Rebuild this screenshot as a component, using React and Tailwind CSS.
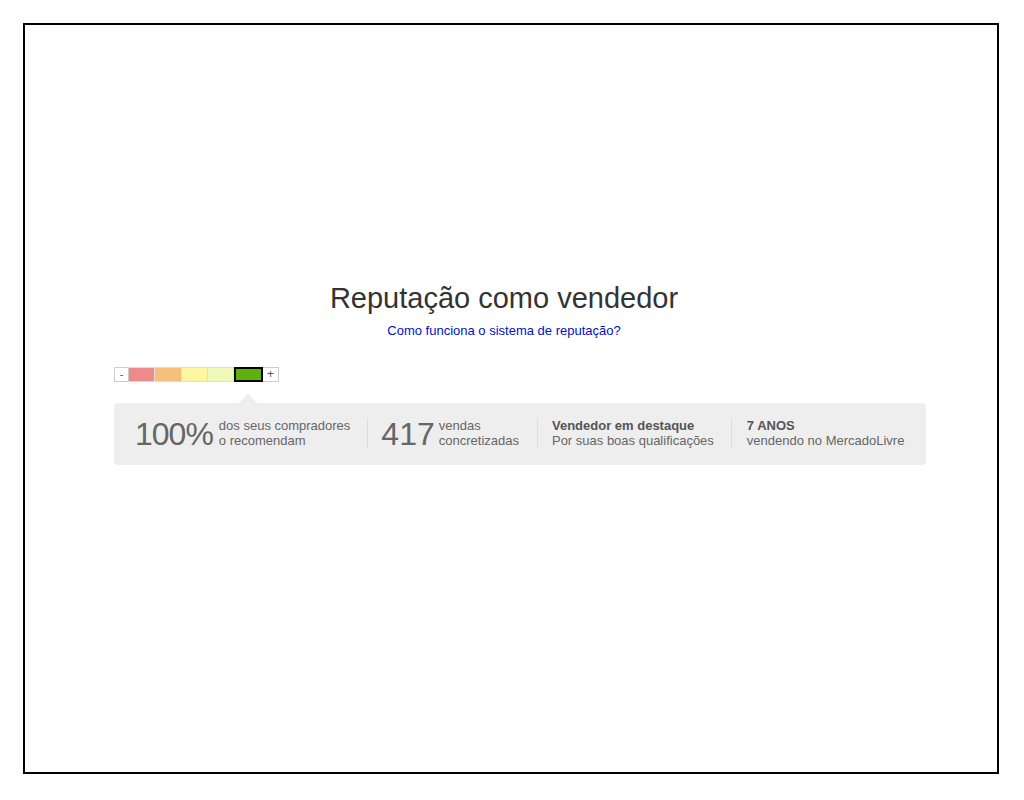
export default function App() {
  const segments = [
    { color: 'bg-[#ef8a8b]', w: 'w-[26px]' },
    { color: 'bg-[#f6c07a]', w: 'w-[27px]' },
    { color: 'bg-[#fff79f]', w: 'w-[26px]' },
    { color: 'bg-[#eef8b8]', w: 'w-[26px]' },
  ];

  return (
    <div className="w-full h-[800px] bg-white pt-[23px] pl-[23px] font-['Liberation_Sans',Arial,sans-serif]">
      <div className="w-[976px] h-[751px] border-2 border-black bg-white">
        <div className="ml-[89px] w-[812px] pt-[257px]">
          {/* header */}
          <div className="w-[780px] text-center">
            <h1 className="text-[29px] leading-[32px] text-[#333]">Reputação como vendedor</h1>
            <a href="#" className="block mt-[9px] text-[13px] leading-[16px] text-[#0010cc]">
              Como funciona o sistema de reputação?
            </a>
          </div>

          {/* thermometer */}
          <div className="mt-[28px] flex h-[15px]">
            <div className="w-[15px] border border-[#ccc] bg-white text-[11px] leading-[12px] text-[#555] text-center">-</div>
            {segments.map((s, i) => (
              <div key={i} className={`${s.w} ${s.color} border-y border-r border-[#ddd]`} />
            ))}
            <div className="w-[29px] border-2 border-black bg-[#5cb10a]" />
            <div className="w-[16px] border border-l-0 border-[#ccc] bg-white text-[12px] leading-[12px] text-[#555] text-center">+</div>
          </div>

          {/* summary panel */}
          <div className="relative mt-[21px] h-[62px] pb-[2px] rounded-[4px] bg-[#eeeeee] flex items-center text-[#666]">
            <div className="absolute -top-[9px] left-[125px] w-0 h-0 border-x-[9px] border-x-transparent border-b-[9px] border-b-[#eeeeee]" />

            <div className="flex items-end pl-[21px] pr-[17px]">
              <span className="text-[32px] leading-[28px] tracking-[-1px]">100%</span>
              <span className="ml-[6px] text-[13px] leading-[15px]">
                dos seus compradores
                <br />o recomendam
              </span>
            </div>

            <div className="flex items-end border-l border-[#dcdcdc] pl-[13px] pr-[18px] pb-[1px] h-[31px]">
              <span className="text-[32px] leading-[28px]">417</span>
              <span className="ml-[4px] text-[13px] leading-[15px]">
                vendas
                <br />concretizadas
              </span>
            </div>

            <div className="border-l border-[#dcdcdc] pl-[14px] pr-[17px] h-[31px] text-[13px] leading-[15px]">
              <div className="font-bold text-[#555]">Vendedor em destaque</div>
              <div>Por suas boas qualificações</div>
            </div>

            <div className="border-l border-[#dcdcdc] pl-[15px] h-[31px] text-[13px] leading-[15px]">
              <div className="font-bold text-[#555]">7 ANOS</div>
              <div>vendendo no MercadoLivre</div>
            </div>
          </div>
        </div>
      </div>
    </div>
  );
}
